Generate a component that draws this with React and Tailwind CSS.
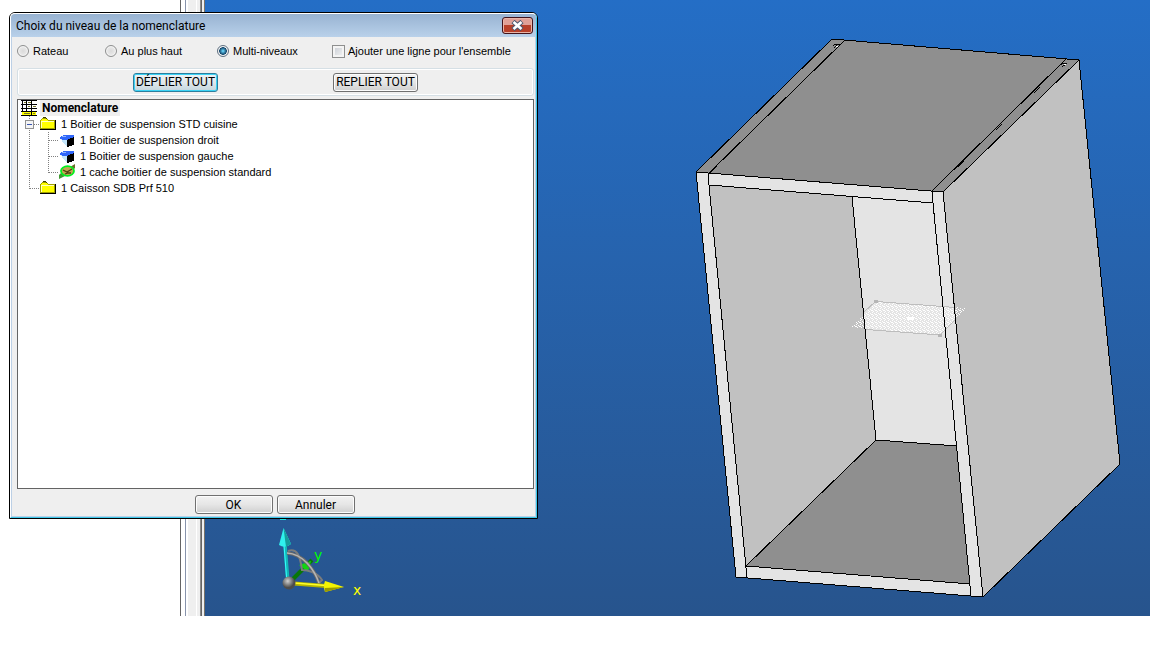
import { useState } from 'react';

const nomenclature = [
  { id: 'std', label: '1 Boitier de suspension STD cuisine', icon: 'folder', guides: ['box'] },
  { id: 'droit', label: '1 Boitier de suspension droit', icon: 'part', guides: ['pass', 'tee'] },
  { id: 'gauche', label: '1 Boitier de suspension gauche', icon: 'part', guides: ['pass', 'tee'] },
  { id: 'cache', label: '1 cache boitier de suspension standard', icon: 'cache', guides: ['pass', 'end'] },
  { id: 'caisson', label: '1 Caisson SDB Prf 510', icon: 'folder', guides: ['end'] },
];

const levels = [
  { value: 'rateau', label: 'Rateau' },
  { value: 'haut', label: 'Au plus haut' },
  { value: 'multi', label: 'Multi-niveaux' },
];

const buttonTones = {
  normal: 'border-[#707070] from-[#f2f2f2] via-[#e6e6e6] to-[#cfcfcf] shadow-[inset_0_0_0_1px_#fcfcfc]',
  focused: 'border-[#2c7f9f] from-[#eef3f5] via-[#e0e8ec] to-[#c4d6de] shadow-[inset_0_0_0_1px_#3cd3f5]',
};

function Guide({ type }) {
  return (
    <svg width="19" height="16" viewBox="0 0 19 16" className="shrink-0" shapeRendering="crispEdges">
      <g stroke="#808080" strokeDasharray="1 1">
        <path d={type === 'end' ? 'M8.5 0V9' : 'M8.5 0V16'} />
        {type !== 'pass' ? <path d="M9 8.5H19" /> : null}
      </g>
      {type === 'box' ? (
        <g>
          <rect x="4.5" y="4.5" width="8" height="8" fill="#f4f4f4" stroke="#919191" />
          <path d="M6 8.5H11" stroke="#3b57b0" />
        </g>
      ) : null}
    </svg>
  );
}

function SheetIcon() {
  return (
    <svg width="16" height="16" viewBox="0 0 16 16" className="shrink-0" shapeRendering="crispEdges">
      <rect width="16" height="16" fill="#fff" />
      <rect x="1" y="12" width="14" height="3" fill="#ffff00" />
      <path d="M0 0.5H16M0 4.5H16M0 8.5H16M0 11.5H16M0 15.5H16M1.5 0V12M5.5 0V12M10.5 0V16" stroke="#000" />
      <path d="M3 2.5H5M7 2.5H10M12 6.5H15M7 6.5H9M3 13.5H9M12 13.5H14" stroke="#77772a" />
    </svg>
  );
}

function FolderIcon() {
  return (
    <svg width="16" height="16" viewBox="0 0 16 16" className="shrink-0" shapeRendering="crispEdges">
      <path d="M0.5 12.5V4.5L2.5 2.5H6.5L8.5 4.5H14.5V12.5Z" fill="#ffff00" stroke="#a0a000" />
      <path d="M3 1.5H6M6 2.5H7" stroke="#404000" />
      <path d="M1 5.5H14M1.5 5V12" stroke="#ffffc0" />
      <path d="M0 13.5H15.5V4" fill="none" stroke="#000" />
    </svg>
  );
}

function PartIcon() {
  return (
    <svg width="16" height="16" viewBox="0 0 16 16" className="shrink-0" shapeRendering="crispEdges">
      <path d="M1 6L8 8V14L5 12Z" fill="#c4e6fb" />
      <path d="M0 6L5 3H15V6L9 8L4 8Z" fill="#2f66fa" />
      <path d="M3 4H7V5H3Z" fill="#8fb4ff" />
      <path d="M8 8L15 5V13L8 15Z" fill="#000" />
    </svg>
  );
}

function CacheIcon() {
  return (
    <svg width="16" height="16" viewBox="0 0 16 16" className="shrink-0">
      <path d="M0 15V11L2 9L6 12Z" fill="#3f9a32" />
      <path d="M11 3L16 0V4L14 6Z" fill="#6b6d2a" />
      <ellipse cx="8.500" cy="7" rx="6.500" ry="4.800" fill="#c0a850" stroke="#00f020" strokeWidth="1.800" />
      <path d="M4 6L8 8L13 5M6 10L9 9L12 9" fill="none" stroke="#4d4010" strokeWidth="1.300" />
    </svg>
  );
}

const icons = { folder: FolderIcon, part: PartIcon, cache: CacheIcon };

function TreeRow({ node }) {
  const Icon = icons[node.icon];
  return (
    <li className="flex h-4 items-center">
      {node.guides.map((type, index) => (
        <Guide key={index} type={type} />
      ))}
      <Icon />
      <span className="ml-[5px] whitespace-nowrap">{node.label}</span>
    </li>
  );
}

function PushButton({ children, tone = 'normal', className = '' }) {
  return (
    <button
      type="button"
      className={`flex h-[19px] items-center justify-center rounded-[3px] border bg-linear-to-b font-[Roboto,sans-serif] text-xs leading-4 whitespace-nowrap ${buttonTones[tone]} ${className}`}
    >
      {children}
    </button>
  );
}

function NomenclatureDialog() {
  const [level, setLevel] = useState('multi');
  const [addLine, setAddLine] = useState(false);

  return (
    <section
      role="dialog"
      aria-labelledby="dialog-title"
      className="absolute top-3 left-[9px] w-[529px] rounded-t-md border border-black bg-[#efefef]"
    >
      <div className="rounded-t-[5px] border border-t-white border-r-[#3cc8ea] border-b-[#3cc8ea] border-l-white">
        <header className="flex h-[23px] items-center justify-between rounded-t bg-linear-to-b from-[#98b3d2] to-[#b9d1ea] pr-[3px] pl-[5px]">
          <h1 id="dialog-title" className="font-[Roboto,sans-serif] text-xs leading-4">
            Choix du niveau de la nomenclature
          </h1>
          <button
            type="button"
            aria-label="Fermer"
            className="flex h-[17px] w-[31px] items-center justify-center rounded-[3px] border border-[#43141c] bg-linear-to-b from-[#e0a097] from-50% to-[#b8402a] to-50% shadow-[inset_0_0_0_1px_#e9b5a8]"
          >
            <svg width="13" height="11" viewBox="0 0 13 11">
              <path d="M2 1.500L11 9.500M11 1.500L2 9.500" stroke="#4c5870" strokeWidth="4.600" />
              <path d="M2.500 2L10.500 9M10.500 2L2.500 9" stroke="#fff" strokeWidth="2.600" />
            </svg>
          </button>
        </header>

        <div className="border-x border-b border-[#bcd0e6] pr-px pl-[5px] text-[11px] leading-4">
          <div className="grid h-[31px] grid-cols-[88px_112px_115px_1fr] pt-1.5">
            {levels.map((item) => (
              <label key={item.value} className="flex h-4 items-center gap-1">
                <input
                  type="radio"
                  name="level"
                  value={item.value}
                  checked={level === item.value}
                  onChange={() => setLevel(item.value)}
                  className="size-3 shrink-0 appearance-none rounded-full border border-[#8e8f8f] bg-radial from-[#dadada] to-[#f4f4f4] shadow-[inset_0_0_0_1px_#f4f4f4] checked:border-[#5f6f80] checked:from-[#5fc4ea] checked:from-10% checked:via-[#12466b] checked:via-50% checked:to-[#e4eaee] checked:to-60%"
                />
                {item.label}
              </label>
            ))}
            <label className="flex h-4 items-center gap-[3px] whitespace-nowrap">
              <input
                type="checkbox"
                checked={addLine}
                onChange={(event) => setAddLine(event.target.checked)}
                className="size-[13px] shrink-0 appearance-none border border-[#8e8f8f] bg-linear-to-br from-[#c6cbd2] to-[#f6f6f6] shadow-[inset_0_0_0_2px_#f4f4f4] checked:from-[#12466b]"
              />
              Ajouter une ligne pour l'ensemble
            </label>
          </div>

          <div className="mb-[3px] flex h-7 items-center gap-[115px] rounded-[3px] border border-[#d5dfe5] pl-[115px] shadow-[inset_0_0_0_1px_#fff]">
            <PushButton tone="focused" className="w-[85px]">
              DÉPLIER TOUT
            </PushButton>
            <PushButton className="w-[85px]">REPLIER TOUT</PushButton>
          </div>

          <div className="h-[390px] overflow-hidden border border-[#646464] bg-white pl-[3px]">
            <div className="flex h-4 items-center">
              <SheetIcon />
              <span className="ml-[3px] bg-[#efefef] px-0.5 font-[Roboto,sans-serif] text-xs leading-4 font-bold">
                Nomenclature
              </span>
            </div>
            <ul>
              {nomenclature.map((node) => (
                <TreeRow key={node.id} node={node} />
              ))}
            </ul>
          </div>

          <footer className="flex justify-center gap-1 pt-1.5 pr-0.5 pb-0.5">
            <PushButton className="w-[78px]">OK</PushButton>
            <PushButton className="w-[78px]">Annuler</PushButton>
          </footer>
        </div>
      </div>
    </section>
  );
}

function CabinetFaces() {
  return (
    <g shapeRendering="crispEdges">
      <polygon points="696,172 736,577 983,597 943,192" fill="#e4e4e4" />
      <polygon points="943,192 1079,60 1120,464 983,597" fill="#c1c1c1" />
      <polygon points="696,172 832,39 1079,60 943,192" fill="#8f8f8f" />

      {/* interior: left wall, back, floor */}
      <polygon points="709,185 852,197 876,440 746,566" fill="#c1c1c1" />
      <polygon points="852,197 933,203 957,446 876,440" fill="#e4e4e4" />
      <polygon points="876,440 957,446 970,584 746,566" fill="#8f8f8f" />
    </g>
  );
}

function CabinetEdges() {
  return (
    <g shapeRendering="crispEdges">
      <g stroke="#000" fill="none">
        <path d="M696 172L832 39L1079 60L1120 464L983 597L736 577Z" />
        <path d="M696 172L943 192L1079 60M943 192L983 597" />
        <path d="M708 174L844 41M932 191L1067 58" />
        <path d="M789 95l6 -6M750 133l7 -7M709 174l8 -8M826 58l6 -6M958 167l6 -6M996 130l6 -6M1034 93l6 -6" />
        <path d="M708 174L709 185L747 578M932 192L933 203L971 596" />
        <path d="M709 185L933 203M852 197L876 440L957 446M876 440L746 566L970 584" />
      </g>

      {/* screw heads on the two side panels */}
      <path d="M833 46l2 -2h3l2 1M834 48l3 -3M1061 65l2 -2h3l1 1M1062 67l4 -3" fill="none" stroke="#000" />
      <path d="M836 46h2M1064 64h2" stroke="#fff" />
    </g>
  );
}

function WorkPlane() {
  return (
    <g shapeRendering="crispEdges">
      <polygon points="876,302 966,308 940,335 851,327" fill="url(#plane-dots)" />
      <path d="M876 301.500L956 307.500M866 329.500L940 335M940 335L955 320M875 302L864 312" stroke="#bdbdbd" fill="none" />
      <path d="M874 300h4v3h-4zM938 334h4v3h-4z" fill="#b5b5b5" />
      <path d="M907 317h7v3h-7z" fill="#fff" />
    </g>
  );
}

function Axes() {
  return (
    <g>
      <path d="M280 519.500H286" stroke="#22e5e5" />
      <path d="M288 583L285 545" stroke="#14b8b8" strokeWidth="3.500" />
      <path d="M287 583L284 545" stroke="#3ff" />
      <path d="M283.500 528L279 545Q285 549 291 544Z" fill="#2ff0ee" />
      <path d="M283.500 528L286 547L291 544Z" fill="#149c9c" />
      <path d="M292 580L312 560" stroke="#087808" strokeWidth="4" />
      <path d="M311 561L299 565L308 572Z" fill="#12d412" />
      <path d="M287 553C303 554 314 569 319 583" fill="none" stroke="#686868" strokeWidth="3.500" />
      <path d="M288 551C297 548 300 555 302 570C308 570 318 573 322 580L318 584" fill="none" stroke="#7c7c7c" strokeWidth="2" />
      <path d="M287 553C303 554 314 569 319 583" fill="none" stroke="#b4b4b4" strokeWidth="1.500" />
      <path d="M294 583.500L326 586" stroke="#b5b500" strokeWidth="4" />
      <path d="M294 583L326 585.500" stroke="#ffff28" strokeWidth="1.500" />
      <path d="M325 581L344 587L325 592Q323 586 325 581Z" fill="#f4f400" />
      <path d="M325 588L344 587L325 592Z" fill="#9b9b00" />
      <circle cx="289" cy="583" r="6.500" fill="url(#origin-ball)" />
      <text x="314" y="560" fill="#00ff00" className="font-['DejaVu_Sans',sans-serif] text-[14px]">
        y
      </text>
      <text x="353" y="595" fill="#ffff00" className="font-['DejaVu_Sans',sans-serif] text-[14px]">
        x
      </text>
    </g>
  );
}

function Viewport() {
  return (
    <main className="min-w-0 flex-1 overflow-hidden bg-linear-to-b from-[#246ec6] to-[#27548d]">
      <svg width="945" height="616" viewBox="205 0 945 616" role="img" aria-label="Vue 3D du caisson">
        <defs>
          <pattern id="plane-dots" width="4" height="4" patternUnits="userSpaceOnUse">
            <path d="M0 0h1v1H0zM2 1h1v1H2zM1 3h1v1H1zM3 2h1v1H3zM0 2h1v1H0z" fill="#fff" />
          </pattern>
          <radialGradient id="origin-ball" cx="0.4" cy="0.35">
            <stop offset="0" stopColor="#d0d0d0" />
            <stop offset="1" stopColor="#4c4c4c" />
          </radialGradient>
        </defs>
        <CabinetFaces />
        <WorkPlane />
        <CabinetEdges />
        <Axes />
      </svg>
    </main>
  );
}

export default function App() {
  return (
    <div className="relative h-screen overflow-hidden bg-white pr-0.5 pb-8 font-['Liberation_Sans',Arial,sans-serif] text-black">
      <div className="flex h-full">
        <aside className="w-[180px] shrink-0 bg-white" />
        <div className="flex w-[25px] shrink-0 border-l border-[#646464]">
          <div className="w-1 bg-white" />
          <div className="w-px bg-[#8793ab]" />
          <div className="w-0.5 bg-white" />
          <div className="w-2 bg-[#efefef]" />
          <div className="w-px bg-white" />
          <div className="w-[3px] bg-[#efefef]" />
          <div className="w-px bg-[#8b8b8b]" />
          <div className="w-px bg-[#646464]" />
          <div className="w-0.5 bg-[#efefef]" />
          <div className="w-px bg-[#77726a]" />
        </div>
        <Viewport />
      </div>
      <NomenclatureDialog />
    </div>
  );
}
